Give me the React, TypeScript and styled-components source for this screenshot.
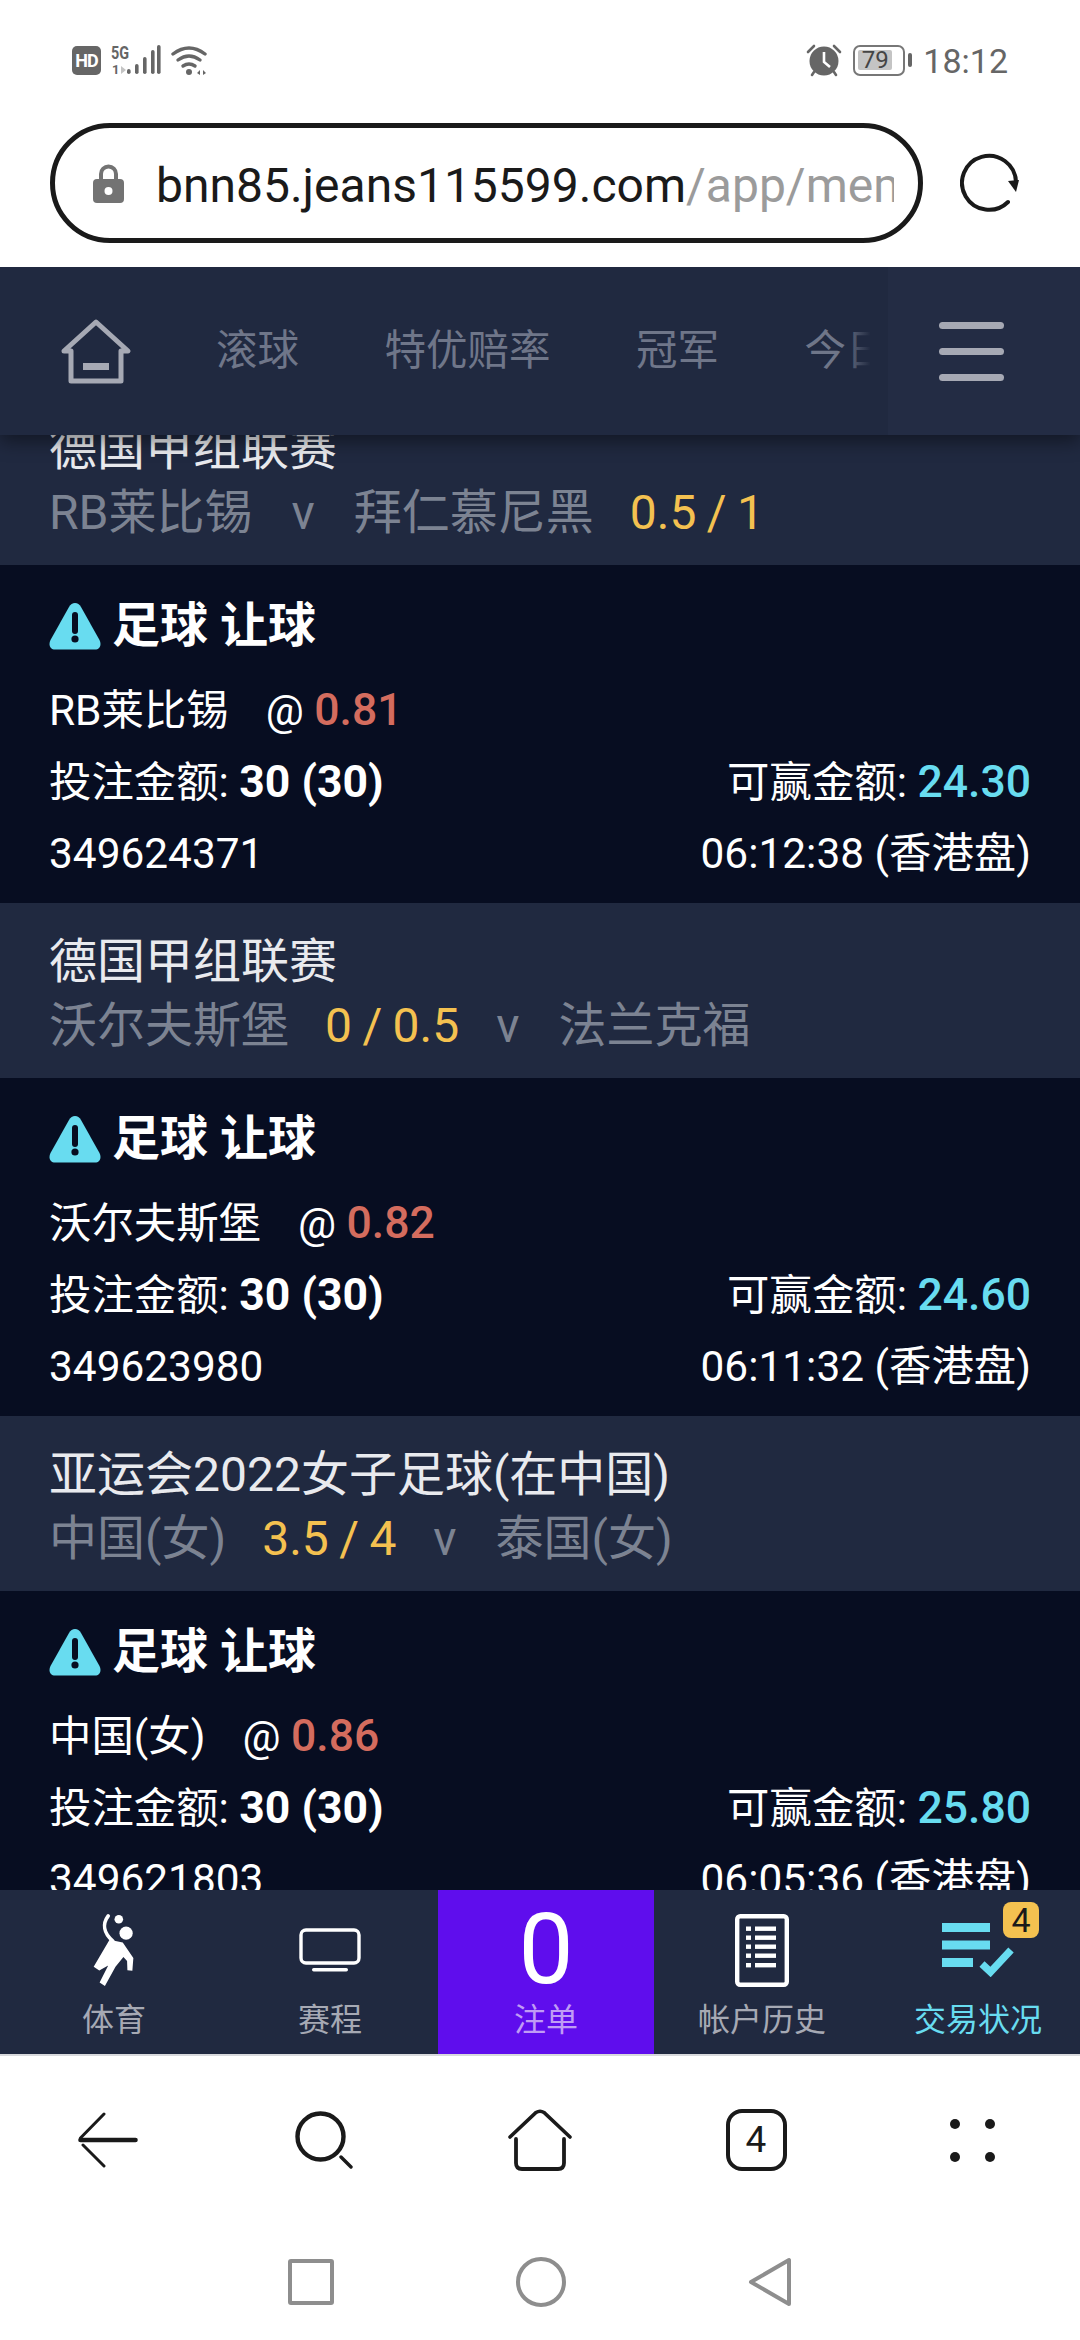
import React from "react";
import styled, { createGlobalStyle } from "styled-components";

const GlobalStyle = createGlobalStyle`
  html, body {
    margin: 0;
    padding: 0;
    background: #fff;
  }
  * {
    box-sizing: border-box;
  }
`;

const NAV = "#202940";
const DARK = "#070d21";
const YELLOW = "#f4c150";
const CYAN = "#68dcf0";
const RED = "#d46c5e";
const GREY = "#7c8392";
const PALE = "#a6a9b4";

const tickets = [
  {
    league: "德国甲组联赛",
    home: "RB莱比锡",
    away: "拜仁慕尼黑",
    line: "0.5 / 1",
    lineOnHome: false,
    pick: "RB莱比锡",
    odds: "0.81",
    win: "24.30",
    id: "349624371",
    time: "06:12:38",
  },
  {
    league: "德国甲组联赛",
    home: "沃尔夫斯堡",
    away: "法兰克福",
    line: "0 / 0.5",
    lineOnHome: true,
    pick: "沃尔夫斯堡",
    odds: "0.82",
    win: "24.60",
    id: "349623980",
    time: "06:11:32",
  },
  {
    league: "亚运会2022女子足球(在中国)",
    home: "中国(女)",
    away: "泰国(女)",
    line: "3.5 / 4",
    lineOnHome: true,
    pick: "中国(女)",
    odds: "0.86",
    win: "25.80",
    id: "349621803",
    time: "06:05:36",
  },
];

const HomeOutline = () => (
  <svg width="72" height="66" viewBox="0 0 72 66" fill="none">
    <path d="M4 33 L36 4 L68 33 H61 V63 H11 V33 Z" stroke={PALE} strokeWidth="5" strokeLinejoin="round" />
    <rect x="23" y="45" width="26" height="7" fill={PALE} />
  </svg>
);

const WarnIcon = () => (
  <svg width="52" height="48" viewBox="0 0 52 48">
    <path
      d="M26 1 C23.5 1 21.5 2.5 20 5 L1.5 38 C-1 43 1.5 47.5 6 47.5 H46 C50.5 47.5 53 43 50.5 38 L32 5 C30.5 2.5 28.5 1 26 1 Z"
      fill={CYAN}
    />
    <path d="M26 13 V29" stroke={DARK} strokeWidth="6" strokeLinecap="round" />
    <circle cx="26" cy="37" r="3.6" fill={DARK} />
  </svg>
);

const PlayerIcon = () => (
  <svg width="43" height="75" viewBox="100 68 130 225">
    <circle cx="200" cy="128" r="20" fill="#fff" />
    <circle cx="178" cy="86" r="13" fill="#fff" />
    <path d="M146 76 C128 100 132 128 160 152" fill="none" stroke="#fff" strokeWidth="11" strokeLinecap="round" />
    <path
      d="M150 148 L190 156 L222 203 L219 242 L204 240 L203 212 L192 200 L168 230 L136 288 L120 277 L146 226 L119 241 L102 230 Z"
      fill="#fff"
    />
  </svg>
);

const MonitorIcon = () => (
  <svg width="62" height="44" viewBox="0 0 62 44" fill="none">
    <rect x="2" y="2" width="58" height="33" rx="5" stroke="#fff" strokeWidth="3.4" />
    <rect x="13" y="40" width="36" height="3.4" rx="1.7" fill="#fff" />
  </svg>
);

const DocIcon = () => (
  <svg width="54" height="73" viewBox="0 0 54 73" fill="none">
    <rect x="2.2" y="2.2" width="49.6" height="68.6" rx="3" stroke="#fff" strokeWidth="4.4" />
    {[12.5, 21.5, 30.5, 39.5, 49].map((y) => (
      <g key={y} fill="#fff">
        <rect x="11" y={y} width="5" height="4.4" />
        <rect x="20" y={y} width="21" height="4.4" />
      </g>
    ))}
  </svg>
);

const ChecklistIcon = () => (
  <svg width="72" height="54" viewBox="0 0 72 54" fill="none">
    <rect width="48" height="9" fill={CYAN} />
    <rect y="17.5" width="48" height="9" fill={CYAN} />
    <rect y="35" width="31" height="9" fill={CYAN} />
    <path d="M40 41 L48.5 49 L69 27" stroke={CYAN} strokeWidth="7.4" />
  </svg>
);

const BackIcon = () => (
  <svg width="60" height="56" viewBox="0 0 60 56" fill="none" stroke="#1a1a1a" strokeLinecap="round">
    <path d="M2.5 28 H57.5" strokeWidth="4.6" />
    <path d="M2.5 26 L26 2" strokeWidth="3" />
    <path d="M5 33 L26 54" strokeWidth="3" />
  </svg>
);

const SearchIcon = () => (
  <svg width="58" height="58" viewBox="0 0 58 58" fill="none" stroke="#1a1a1a">
    <circle cx="25.5" cy="25.5" r="23" strokeWidth="4.4" />
    <path d="M46 46 L56 56" strokeWidth="3.4" strokeLinecap="round" />
  </svg>
);

const HomeIcon = () => (
  <svg width="64" height="62" viewBox="0 0 64 62" fill="none" stroke="#1a1a1a" strokeLinecap="round">
    <path d="M2 28 L28 3.5 Q32 1 36 3.5 L62 28" strokeWidth="3.6" />
    <path d="M8 30 V54 Q8 60 14 60 H50 Q56 60 56 54 V30" strokeWidth="3.8" />
  </svg>
);

const ReloadIcon = () => (
  <svg width="60" height="60" viewBox="0 0 60 60" fill="none">
    <path d="M56 30 A27 27 0 1 0 48 50" stroke="#1a1a1a" strokeWidth="4" strokeLinecap="round" />
    <path d="M48 29 L59 28 L56 40 Z" fill="#1a1a1a" />
  </svg>
);

const LockIcon = () => (
  <svg width="31" height="39" viewBox="0 0 31 39">
    <path d="M8 17 V10 A7.5 7.5 0 0 1 23 10 V17" fill="none" stroke="#737373" strokeWidth="4" />
    <rect y="15" width="31" height="24" rx="4" fill="#737373" />
    <circle cx="15.5" cy="27" r="4" fill="#fff" />
  </svg>
);

const AlarmIcon = () => (
  <svg width="36" height="33" viewBox="0 0 36 33">
    <circle cx="18" cy="17" r="14.5" fill="#666" />
    <path d="M18 8 V18 L24 23" fill="none" stroke="#fff" strokeWidth="2.6" />
    <path d="M2 8 L8 2 M34 8 L28 2 M6 31 L8 28 M30 31 L28 28" stroke="#666" strokeWidth="2.6" strokeLinecap="round" />
  </svg>
);

const SignalIcon = () => (
  <svg width="50" height="30" viewBox="0 0 50 30">
    {[
      [17, 24, 5],
      [25, 19, 10],
      [33, 12, 17],
      [41, 5, 24],
      [47, 0, 29],
    ].map(([x, y, h]) => (
      <rect key={x} x={x - 1} y={y} width="3.6" height={h} rx="1.8" fill="#666" />
    ))}
    <path d="M10 21 L15 25 L10 29 Z" fill="#c4c4c4" />
  </svg>
);

const WifiIcon = () => (
  <svg width="37" height="31" viewBox="0 0 37 31" fill="none" stroke="#666" strokeLinecap="round">
    <path d="M2 9 Q18 -3 34 9" strokeWidth="3.4" />
    <path d="M7 15 Q18 7 29 15" strokeWidth="3.4" />
    <path d="M12 21 Q18 17 24 21" strokeWidth="3.4" />
    <circle cx="18" cy="27" r="3" fill="#666" stroke="none" />
    <path d="M26 28 L29 25 V30 Z M32 25 L35 28 L32 30 Z" fill="#666" stroke="none" />
  </svg>
);

const App = () => {
  return (
    <Screen>
      <GlobalStyle />
      <StatusBar>
        <StatusGroup>
          <HdTag>HD</HdTag>
          <SignalBox>
            <NetLabel>5G</NetLabel>
            <SimLabel>1</SimLabel>
            <SignalIcon />
          </SignalBox>
          <WifiIcon />
        </StatusGroup>
        <StatusGroup>
          <AlarmIcon />
          <Battery>
            <BatteryLevel>79</BatteryLevel>
          </Battery>
          <BatteryNub />
          <Clock>18:12</Clock>
        </StatusGroup>
      </StatusBar>

      <BrowserBar>
        <UrlPill>
          <LockIcon />
          <UrlText>
            bnn85.jeans115599.com<span>/app/member/bets</span>
          </UrlText>
        </UrlPill>
        <ReloadIcon />
      </BrowserBar>

      <SiteHeader>
        <HomeLink>
          <HomeOutline />
        </HomeLink>
        <SportTabs>
          <SportTab>滚球</SportTab>
          <SportTab>特优赔率</SportTab>
          <SportTab>冠军</SportTab>
          <SportTab>今日</SportTab>
          <TabsFade />
        </SportTabs>
        <MenuButton>
          <MenuLine />
          <MenuLine />
          <MenuLine />
        </MenuButton>
      </SiteHeader>

      <Viewport>
        <TicketList>
          {tickets.map((t) => (
            <React.Fragment key={t.id}>
              <LeagueCard>
                <LeagueName>{t.league}</LeagueName>
                <Teams>
                  <span>{t.home}</span>
                  {t.lineOnHome && <Line>{t.line}</Line>}
                  <span>v</span>
                  <span>{t.away}</span>
                  {!t.lineOnHome && <Line>{t.line}</Line>}
                </Teams>
              </LeagueCard>
              <BetCard>
                <BetTitle>
                  <WarnIcon />
                  足球 让球
                </BetTitle>
                <BetRow>
                  <Pick>
                    <PickName>{t.pick}</PickName>@ <Odds>{t.odds}</Odds>
                  </Pick>
                </BetRow>
                <BetRow>
                  <span>
                    投注金额: <Strong>30 (30)</Strong>
                  </span>
                  <span>
                    可赢金额: <Win>{t.win}</Win>
                  </span>
                </BetRow>
                <BetRow>
                  <span>{t.id}</span>
                  <span>{t.time} (香港盘)</span>
                </BetRow>
              </BetCard>
            </React.Fragment>
          ))}
        </TicketList>
      </Viewport>

      <TabBar>
        <BarItem>
          <IconSlot>
            <PlayerIcon />
          </IconSlot>
          <BarLabel>体育</BarLabel>
        </BarItem>
        <BarItem>
          <IconSlot>
            <MonitorIcon />
          </IconSlot>
          <BarLabel>赛程</BarLabel>
        </BarItem>
        <BarItem $highlight>
          <IconSlot>
            <BetCount>0</BetCount>
          </IconSlot>
          <BarLabel $color="#c09cf5">注单</BarLabel>
        </BarItem>
        <BarItem>
          <IconSlot>
            <DocIcon />
          </IconSlot>
          <BarLabel>帐户历史</BarLabel>
        </BarItem>
        <BarItem>
          <IconSlot>
            <ChecklistIcon />
            <Badge>4</Badge>
          </IconSlot>
          <BarLabel $color={CYAN}>交易状况</BarLabel>
        </BarItem>
      </TabBar>

      <Toolbar>
        <BackIcon />
        <SearchIcon />
        <HomeIcon />
        <TabCount>4</TabCount>
        <DotsGrid>
          <Dot />
          <Dot />
          <Dot />
          <Dot />
        </DotsGrid>
      </Toolbar>

      <SystemNav>
        <SquareKey />
        <CircleKey />
        <svg width="44" height="50" viewBox="0 0 44 50" fill="none">
          <path d="M41 3 V47 L3 25 Z" stroke="#8e8e8e" strokeWidth="4" strokeLinejoin="round" />
        </svg>
      </SystemNav>
    </Screen>
  );
};

export default App;

const Screen = styled.div`
  width: 1080px;
  height: 2340px;
  display: flex;
  flex-direction: column;
  overflow: hidden;
  background: #fff;
  font-family: Roboto, "Noto Sans CJK SC", sans-serif;
`;

const StatusBar = styled.div`
  height: 100px;
  padding: 44px 72px 0 72px;
  display: flex;
  justify-content: space-between;
  align-items: flex-start;
`;

const StatusGroup = styled.div`
  display: flex;
  align-items: center;
  gap: 10px;
  height: 32px;
`;

const HdTag = styled.div`
  width: 29px;
  height: 29px;
  border-radius: 5px;
  background: #666;
  color: #fff;
  font-size: 18px;
  font-weight: 700;
  line-height: 29px;
  text-align: center;
  letter-spacing: -1px;
`;

const SignalBox = styled.div`
  position: relative;
  width: 50px;
  height: 30px;
`;

const NetLabel = styled.span`
  position: absolute;
  left: 0;
  top: 0;
  font-size: 18px;
  font-weight: 700;
  line-height: 15px;
  color: #666;
  transform: scaleX(0.8);
  transform-origin: left center;
`;

const SimLabel = styled.span`
  position: absolute;
  left: 1px;
  bottom: 0;
  font-size: 13px;
  font-weight: 700;
  line-height: 11px;
  color: #666;
`;

const Battery = styled.div`
  width: 52px;
  height: 31px;
  border: 2.5px solid #777;
  border-radius: 7px;
  padding: 3px;
  margin-left: 1px;
`;

const BatteryLevel = styled.div`
  width: 34px;
  height: 20px;
  background: #c4c4c4;
  border-radius: 2px;
  color: #444;
  font-size: 24px;
  line-height: 20px;
  text-align: center;
`;

const BatteryNub = styled.div`
  width: 4px;
  height: 14px;
  border-radius: 2px;
  background: #666;
  margin-left: -7px;
`;

const Clock = styled.div`
  font-size: 34px;
  line-height: 32px;
  color: #666;
  margin: 2px 0 0 1px;
`;

const BrowserBar = styled.div`
  height: 167px;
  padding: 23px 60px 0 50px;
  display: flex;
  justify-content: space-between;
  align-items: flex-start;

  & > svg {
    margin-top: 29px;
  }
`;

const UrlPill = styled.div`
  width: 873px;
  height: 120px;
  border: 5px solid #1a1a1a;
  border-radius: 60px;
  padding: 0 24px 0 38px;
  display: flex;
  align-items: center;
  gap: 32px;

  & > svg {
    flex: none;
  }
`;

const UrlText = styled.div`
  flex: 1;
  overflow: hidden;
  white-space: nowrap;
  padding-top: 4px;
  font-size: 48px;
  color: #1a1a1a;

  span {
    color: #9b9b9b;
  }
`;

const SiteHeader = styled.div`
  position: relative;
  z-index: 2;
  height: 168px;
  flex: none;
  display: flex;
  align-items: center;
  background: ${NAV};
  box-shadow: 0 6px 18px rgba(0, 0, 0, 0.45);
  clip-path: inset(0 0 -40px 0);
`;

const HomeLink = styled.div`
  width: 216px;
  flex: none;
  padding-left: 60px;
  display: flex;
`;

const SportTabs = styled.div`
  position: relative;
  flex: 1;
  min-width: 0;
  height: 100%;
  padding-bottom: 8px;
  display: flex;
  align-items: center;
  gap: 85.5px;
  overflow: hidden;
`;

const SportTab = styled.div`
  flex: none;
  font-size: 41.5px;
  color: #6f7689;
`;

const TabsFade = styled.div`
  position: absolute;
  top: 0;
  right: 0;
  bottom: 0;
  width: 44px;
  background: linear-gradient(to right, rgba(32, 41, 64, 0), ${NAV} 60%);
`;

const MenuButton = styled.div`
  width: 192px;
  flex: none;
  padding-left: 51px;
  display: flex;
  flex-direction: column;
  gap: 19px;
  background: #232c44;
  height: 100%;
  justify-content: center;
`;

const MenuLine = styled.div`
  width: 65px;
  height: 7px;
  border-radius: 4px;
  background: ${PALE};
`;

const Viewport = styled.div`
  flex: 1;
  min-height: 0;
  overflow: hidden;
  background: ${DARK};
`;

const TicketList = styled.div`
  margin-top: -45px;
`;

const LeagueCard = styled.div`
  height: 175px;
  padding: 26px 49px 0;
  background: ${NAV};
  font-size: 48px;
  line-height: 66px;
`;

const LeagueName = styled.div`
  color: #e9eaee;
  margin-bottom: -2.5px;
`;

const Teams = styled.div`
  display: flex;
  gap: 39px;
  color: ${GREY};
`;

const Line = styled.span`
  color: ${YELLOW};
  margin: 0 -2px 0 -3px;
  word-spacing: -1.5px;
`;

const BetCard = styled.div`
  height: 338px;
  padding: 31px 49px 13px;
  background: ${DARK};
  color: #fff;
`;

const BetTitle = styled.div`
  height: 60px;
  margin-bottom: 18px;
  display: flex;
  align-items: center;
  gap: 11px;
  font-size: 48px;
  line-height: 60px;
  font-weight: 700;
`;

const BetRow = styled.div`
  height: 72px;
  display: flex;
  justify-content: space-between;
  align-items: center;
  font-size: 42.4px;
  line-height: 72px;
  white-space: pre;
`;

const Pick = styled.span``;

const PickName = styled.span`
  margin-right: 37px;
`;

const Odds = styled.span`
  color: ${RED};
  font-size: 44.5px;
  font-weight: 500;
`;

const Strong = styled.span`
  font-size: 44.5px;
  font-weight: 700;
`;

const Win = styled.span`
  color: ${CYAN};
  font-size: 44.5px;
  font-weight: 500;
`;

const TabBar = styled.div`
  height: 166px;
  flex: none;
  padding-left: 6px;
  display: grid;
  grid-template-columns: repeat(5, 216px);
  background: ${NAV};
  border-bottom: 2px solid #d8d9dd;
`;

const BarItem = styled.div<{ $highlight?: boolean }>`
  padding-top: 23px;
  display: flex;
  flex-direction: column;
  align-items: center;
  gap: 11px;
  background: ${(p) => (p.$highlight ? "#5f0ded" : "transparent")};
`;

const IconSlot = styled.div`
  position: relative;
  width: 100%;
  height: 74px;
  display: flex;
  align-items: center;
  justify-content: center;
`;

const BetCount = styled.div`
  color: #fff;
  font-size: 98px;
  line-height: 74px;
`;

const BarLabel = styled.div<{ $color?: string }>`
  color: ${(p) => p.$color || PALE};
  font-size: 32px;
  line-height: 44px;
`;

const Badge = styled.div`
  position: absolute;
  top: -11px;
  right: 47px;
  width: 36px;
  height: 36px;
  border-radius: 8px;
  background: ${YELLOW};
  color: #1a1a1a;
  font-size: 34px;
  line-height: 36px;
  text-align: center;
`;

const Toolbar = styled.div`
  height: 168px;
  flex: none;
  display: grid;
  grid-template-columns: repeat(5, 216px);
  justify-items: center;
  align-items: center;
`;

const TabCount = styled.div`
  width: 61px;
  height: 62px;
  border: 4.4px solid #1a1a1a;
  border-radius: 16px;
  color: #1a1a1a;
  font-size: 37px;
  line-height: 53px;
  text-align: center;
`;

const DotsGrid = styled.div`
  display: grid;
  grid-template-columns: 10px 10px;
  column-gap: 25px;
  row-gap: 23px;
`;

const Dot = styled.div`
  width: 10px;
  height: 10px;
  border-radius: 50%;
  background: #1a1a1a;
`;

const SystemNav = styled.div`
  height: 116px;
  flex: none;
  display: flex;
  justify-content: center;
  align-items: center;
  gap: 182px;
`;

const SquareKey = styled.div`
  width: 46px;
  height: 46px;
  border: 4px solid #8e8e8e;
  border-radius: 3px;
`;

const CircleKey = styled.div`
  width: 50px;
  height: 50px;
  border: 4px solid #8e8e8e;
  border-radius: 50%;
`;
